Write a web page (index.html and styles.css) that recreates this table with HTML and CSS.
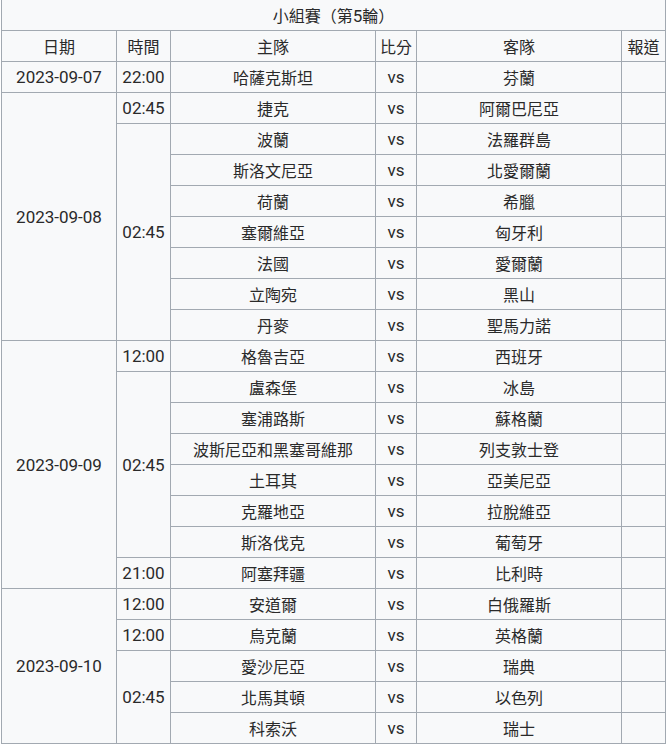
FILE: index.html
```html
<!DOCTYPE html>
<html lang="zh-Hant">
<head>
<meta charset="utf-8">
<title>小組賽（第5輪）</title>
<link rel="stylesheet" href="styles.css">
</head>
<body>
<table class="sched">
  <colgroup>
    <col class="c-date"><col class="c-time"><col class="c-home"><col class="c-score"><col class="c-away"><col class="c-news">
  </colgroup>
  <tr><th class="title" colspan="6">小組賽（第<span class="n">5</span>輪）</th></tr>
  <tr><th>日期</th><th>時間</th><th>主隊</th><th>比分</th><th>客隊</th><th>報道</th></tr>

  <tr><td class="n">2023-09-07</td><td class="n">22:00</td><td>哈薩克斯坦</td><td class="n">vs</td><td>芬蘭</td><td></td></tr>

  <tr><td class="n" rowspan="8">2023-09-08</td><td class="n">02:45</td><td>捷克</td><td class="n">vs</td><td>阿爾巴尼亞</td><td></td></tr>
  <tr><td class="n" rowspan="7">02:45</td><td>波蘭</td><td class="n">vs</td><td>法羅群島</td><td></td></tr>
  <tr><td>斯洛文尼亞</td><td class="n">vs</td><td>北愛爾蘭</td><td></td></tr>
  <tr><td>荷蘭</td><td class="n">vs</td><td>希臘</td><td></td></tr>
  <tr><td>塞爾維亞</td><td class="n">vs</td><td>匈牙利</td><td></td></tr>
  <tr><td>法國</td><td class="n">vs</td><td>愛爾蘭</td><td></td></tr>
  <tr><td>立陶宛</td><td class="n">vs</td><td>黑山</td><td></td></tr>
  <tr><td>丹麥</td><td class="n">vs</td><td>聖馬力諾</td><td></td></tr>

  <tr><td class="n" rowspan="8">2023-09-09</td><td class="n">12:00</td><td>格魯吉亞</td><td class="n">vs</td><td>西班牙</td><td></td></tr>
  <tr><td class="n" rowspan="6">02:45</td><td>盧森堡</td><td class="n">vs</td><td>冰島</td><td></td></tr>
  <tr><td>塞浦路斯</td><td class="n">vs</td><td>蘇格蘭</td><td></td></tr>
  <tr><td>波斯尼亞和黑塞哥維那</td><td class="n">vs</td><td>列支敦士登</td><td></td></tr>
  <tr><td>土耳其</td><td class="n">vs</td><td>亞美尼亞</td><td></td></tr>
  <tr><td>克羅地亞</td><td class="n">vs</td><td>拉脫維亞</td><td></td></tr>
  <tr><td>斯洛伐克</td><td class="n">vs</td><td>葡萄牙</td><td></td></tr>
  <tr><td class="n">21:00</td><td>阿塞拜疆</td><td class="n">vs</td><td>比利時</td><td></td></tr>

  <tr><td class="n" rowspan="5">2023-09-10</td><td class="n">12:00</td><td>安道爾</td><td class="n">vs</td><td>白俄羅斯</td><td></td></tr>
  <tr><td class="n">12:00</td><td>烏克蘭</td><td class="n">vs</td><td>英格蘭</td><td></td></tr>
  <tr><td class="n" rowspan="3">02:45</td><td>愛沙尼亞</td><td class="n">vs</td><td>瑞典</td><td></td></tr>
  <tr><td>北馬其頓</td><td class="n">vs</td><td>以色列</td><td></td></tr>
  <tr><td>科索沃</td><td class="n">vs</td><td>瑞士</td><td></td></tr>
</table>
</body>
</html>
```
FILE: styles.css
```css
html, body {
  margin: 0;
  padding: 0;
  background: #ffffff;
}
body {
  font-family: "Noto Sans CJK TC", "Noto Sans", sans-serif;
  font-size: 16px;
  color: #2a2a2a;
}
.sched {
  border-collapse: collapse;
  table-layout: fixed;
  width: 664px;
  margin: -1px 0 0 1px;
  background: #f8f9fa;
}
.c-date { width: 115px; }
.c-time { width: 54px; }
.c-home { width: 205px; }
.c-score { width: 41px; }
.c-away { width: 205px; }
.c-news { width: 44px; }
.sched th,
.sched td {
  border: 1px solid #a2a9b1;
  padding: 0;
  height: 30px;
  line-height: 20px;
  text-align: center;
  vertical-align: middle;
  font-weight: normal;
  white-space: nowrap;
}
.sched .n {
  font-family: Roboto, "Noto Sans", sans-serif;
  font-size: 17px;
}
```
